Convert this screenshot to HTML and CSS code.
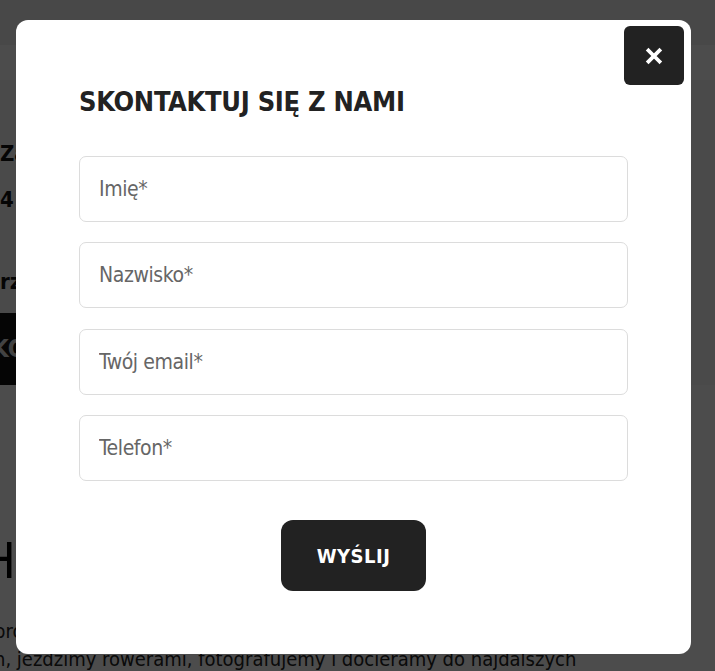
FILE: index.html
```html
<!DOCTYPE html>
<html lang="pl">
<head>
    <meta charset="utf-8">
    <title>Skontaktuj się z nami</title>
    <link rel="stylesheet" href="styles.css">
</head>
<body>
    <div class="page">
        <div class="page-top"></div>
        <div class="page-nav"></div>
        <div class="contact-info">
            <p class="info-line first">Zadzwoń do nas</p>
            <p class="info-line">4 razy w tygodniu</p>
            <p class="info-line third">rzeczy do zabrania</p>
            <div class="contact-band">KONTAKT</div>
        </div>
        <div class="about">
            <h2 class="about-title">HISTORIA</h2>
            <p class="about-text">prowadzimy wyprawy po całym świecie, chodzimy po górach<br>n, jeździmy rowerami, fotografujemy i docieramy do najdalszych</p>
        </div>
    </div>

    <div class="overlay">
        <div class="modal">
            <button class="modal-close" type="button" aria-label="Zamknij">
                <svg width="18" height="18" viewBox="0 0 18 18">
                    <path d="M3.5 3.5 L14.5 14.5 M14.5 3.5 L3.5 14.5" stroke="#fff" stroke-width="3.8" stroke-linecap="square" fill="none"/>
                </svg>
            </button>
            <h2 class="modal-title">SKONTAKTUJ SIĘ Z NAMI</h2>
            <form class="contact-form">
                <input class="field" type="text" placeholder="Imię*">
                <input class="field" type="text" placeholder="Nazwisko*">
                <input class="field" type="email" placeholder="Twój email*">
                <input class="field" type="tel" placeholder="Telefon*">
                <div class="form-actions">
                    <button class="submit" type="submit">WYŚLIJ</button>
                </div>
            </form>
        </div>
    </div>
</body>
</html>
```

FILE: styles.css
```css
body {
    margin: 0;
    background-color: #fff;
    color: #222;
    font-family: "DejaVu Sans Condensed", "DejaVu Sans", sans-serif;
    overflow: hidden;
}

/* page behind the popup */
.page {
    height: 671px;
    overflow: hidden;
}

.page-top {
    height: 45px;
    background-color: #f2f2f2;
}

.page-nav {
    height: 35px;
    background-color: #fff;
}

.contact-info {
    background-color: #f8f8f8;
    padding-top: 62px;
}

.info-line {
    margin: 0 0 22px 0;
    font-size: 22px;
    font-weight: bold;
    line-height: 24px;
    color: #111;
}

.info-line.third {
    margin-top: 58px;
    margin-bottom: 19px;
}

.contact-band {
    width: 260px;
    height: 72px;
    line-height: 72px;
    margin-left: -8px;
    background-color: #111;
    color: #ddd;
    font-size: 24px;
    font-weight: bold;
}

.about {
    background-color: #fff;
    padding-top: 150px;
    margin-left: -6px;
}

.about-title {
    margin: 0 0 30px -12px;
    font-size: 50px;
    line-height: 52px;
    font-weight: normal;
    color: #000;
}

.about-text {
    margin: 0;
    font-size: 20px;
    line-height: 28px;
    color: #222;
}

/* popup */
.overlay {
    position: fixed;
    top: 0;
    left: 0;
    right: 0;
    bottom: 0;
    background-color: rgba(0, 0, 0, 0.7);
    padding: 20px 24px 0 16px;
}

.modal {
    position: relative;
    height: 634px;
    box-sizing: border-box;
    background-color: #fff;
    border-radius: 12px;
    padding: 64px 63px 0 63px;
}

.modal-close {
    position: absolute;
    top: 6px;
    right: 7px;
    width: 60px;
    height: 59px;
    border: none;
    border-radius: 6px;
    background-color: #222;
    padding: 0;
    display: flex;
    align-items: center;
    justify-content: center;
    cursor: pointer;
}

.modal-title {
    margin: 0 0 37px 0;
    font-size: 27px;
    line-height: 35px;
    font-weight: bold;
    letter-spacing: -0.3px;
    color: #222;
}

.contact-form {
    display: flex;
    flex-direction: column;
    gap: 20.3px;
}

.field {
    height: 66px;
    box-sizing: border-box;
    border: 1px solid #dcdcdc;
    border-radius: 7px;
    padding: 0 19px;
    font-family: inherit;
    font-size: 21px;
    letter-spacing: -0.4px;
    color: #222;
    outline: none;
}

.field::placeholder {
    color: #666;
}

.form-actions {
    display: flex;
    justify-content: center;
    margin-top: 19px;
}

.submit {
    width: 145px;
    height: 71px;
    border: none;
    border-radius: 12px;
    background-color: #222;
    color: #fff;
    font-family: inherit;
    font-size: 20px;
    font-weight: bold;
    letter-spacing: 0.5px;
    cursor: pointer;
}
```
